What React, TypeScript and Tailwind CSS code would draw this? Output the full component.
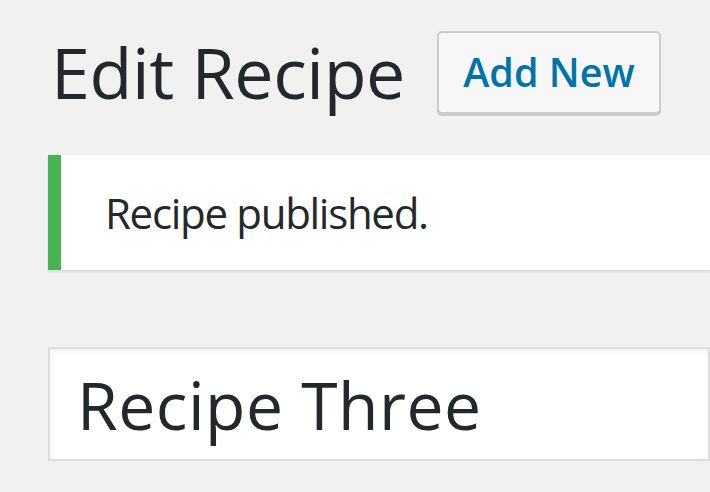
export default function App() {
  return (
    <div
      className="w-[710px] h-[492px] overflow-hidden bg-[#f1f1f1] text-[#23282d]"
      style={{ fontFamily: '"Open Sans", "Noto Sans", sans-serif' }}
    >
      <div className="pl-[48px] pt-[31px]">
        {/* heading */}
        <div className="flex items-center h-[83px]">
          <h1 className="text-[70px] leading-none font-normal pl-[3px] tracking-[-0.4px] -mt-[2px]">Edit Recipe</h1>
          <button className="ml-[32px] h-[83px] w-[224px] rounded-[5px] border-2 border-[#cccccc] bg-[#f7f7f7] text-[#0073aa] text-[39.5px] font-semibold shadow-[0_2px_0_#cccccc]">
            Add New
          </button>
        </div>

        {/* notice */}
        <div className="mt-[41px] flex h-[115px] bg-white shadow-[0_2px_2px_rgba(0,0,0,0.1)]">
          <div className="w-[13px] bg-[#46b450]" />
          <p className="pl-[44px] flex items-center text-[42px] leading-none tracking-[-1.3px]">Recipe published.</p>
        </div>

        {/* title input */}
        <div className="mt-[77px] h-[114px] border-2 border-[#dddddd] bg-white shadow-[inset_0_2px_4px_rgba(0,0,0,0.07)] flex items-center pl-[27px]">
          <span className="text-[66px] leading-none tracking-[0.5px]">Recipe Three</span>
        </div>
      </div>
    </div>
  );
}
